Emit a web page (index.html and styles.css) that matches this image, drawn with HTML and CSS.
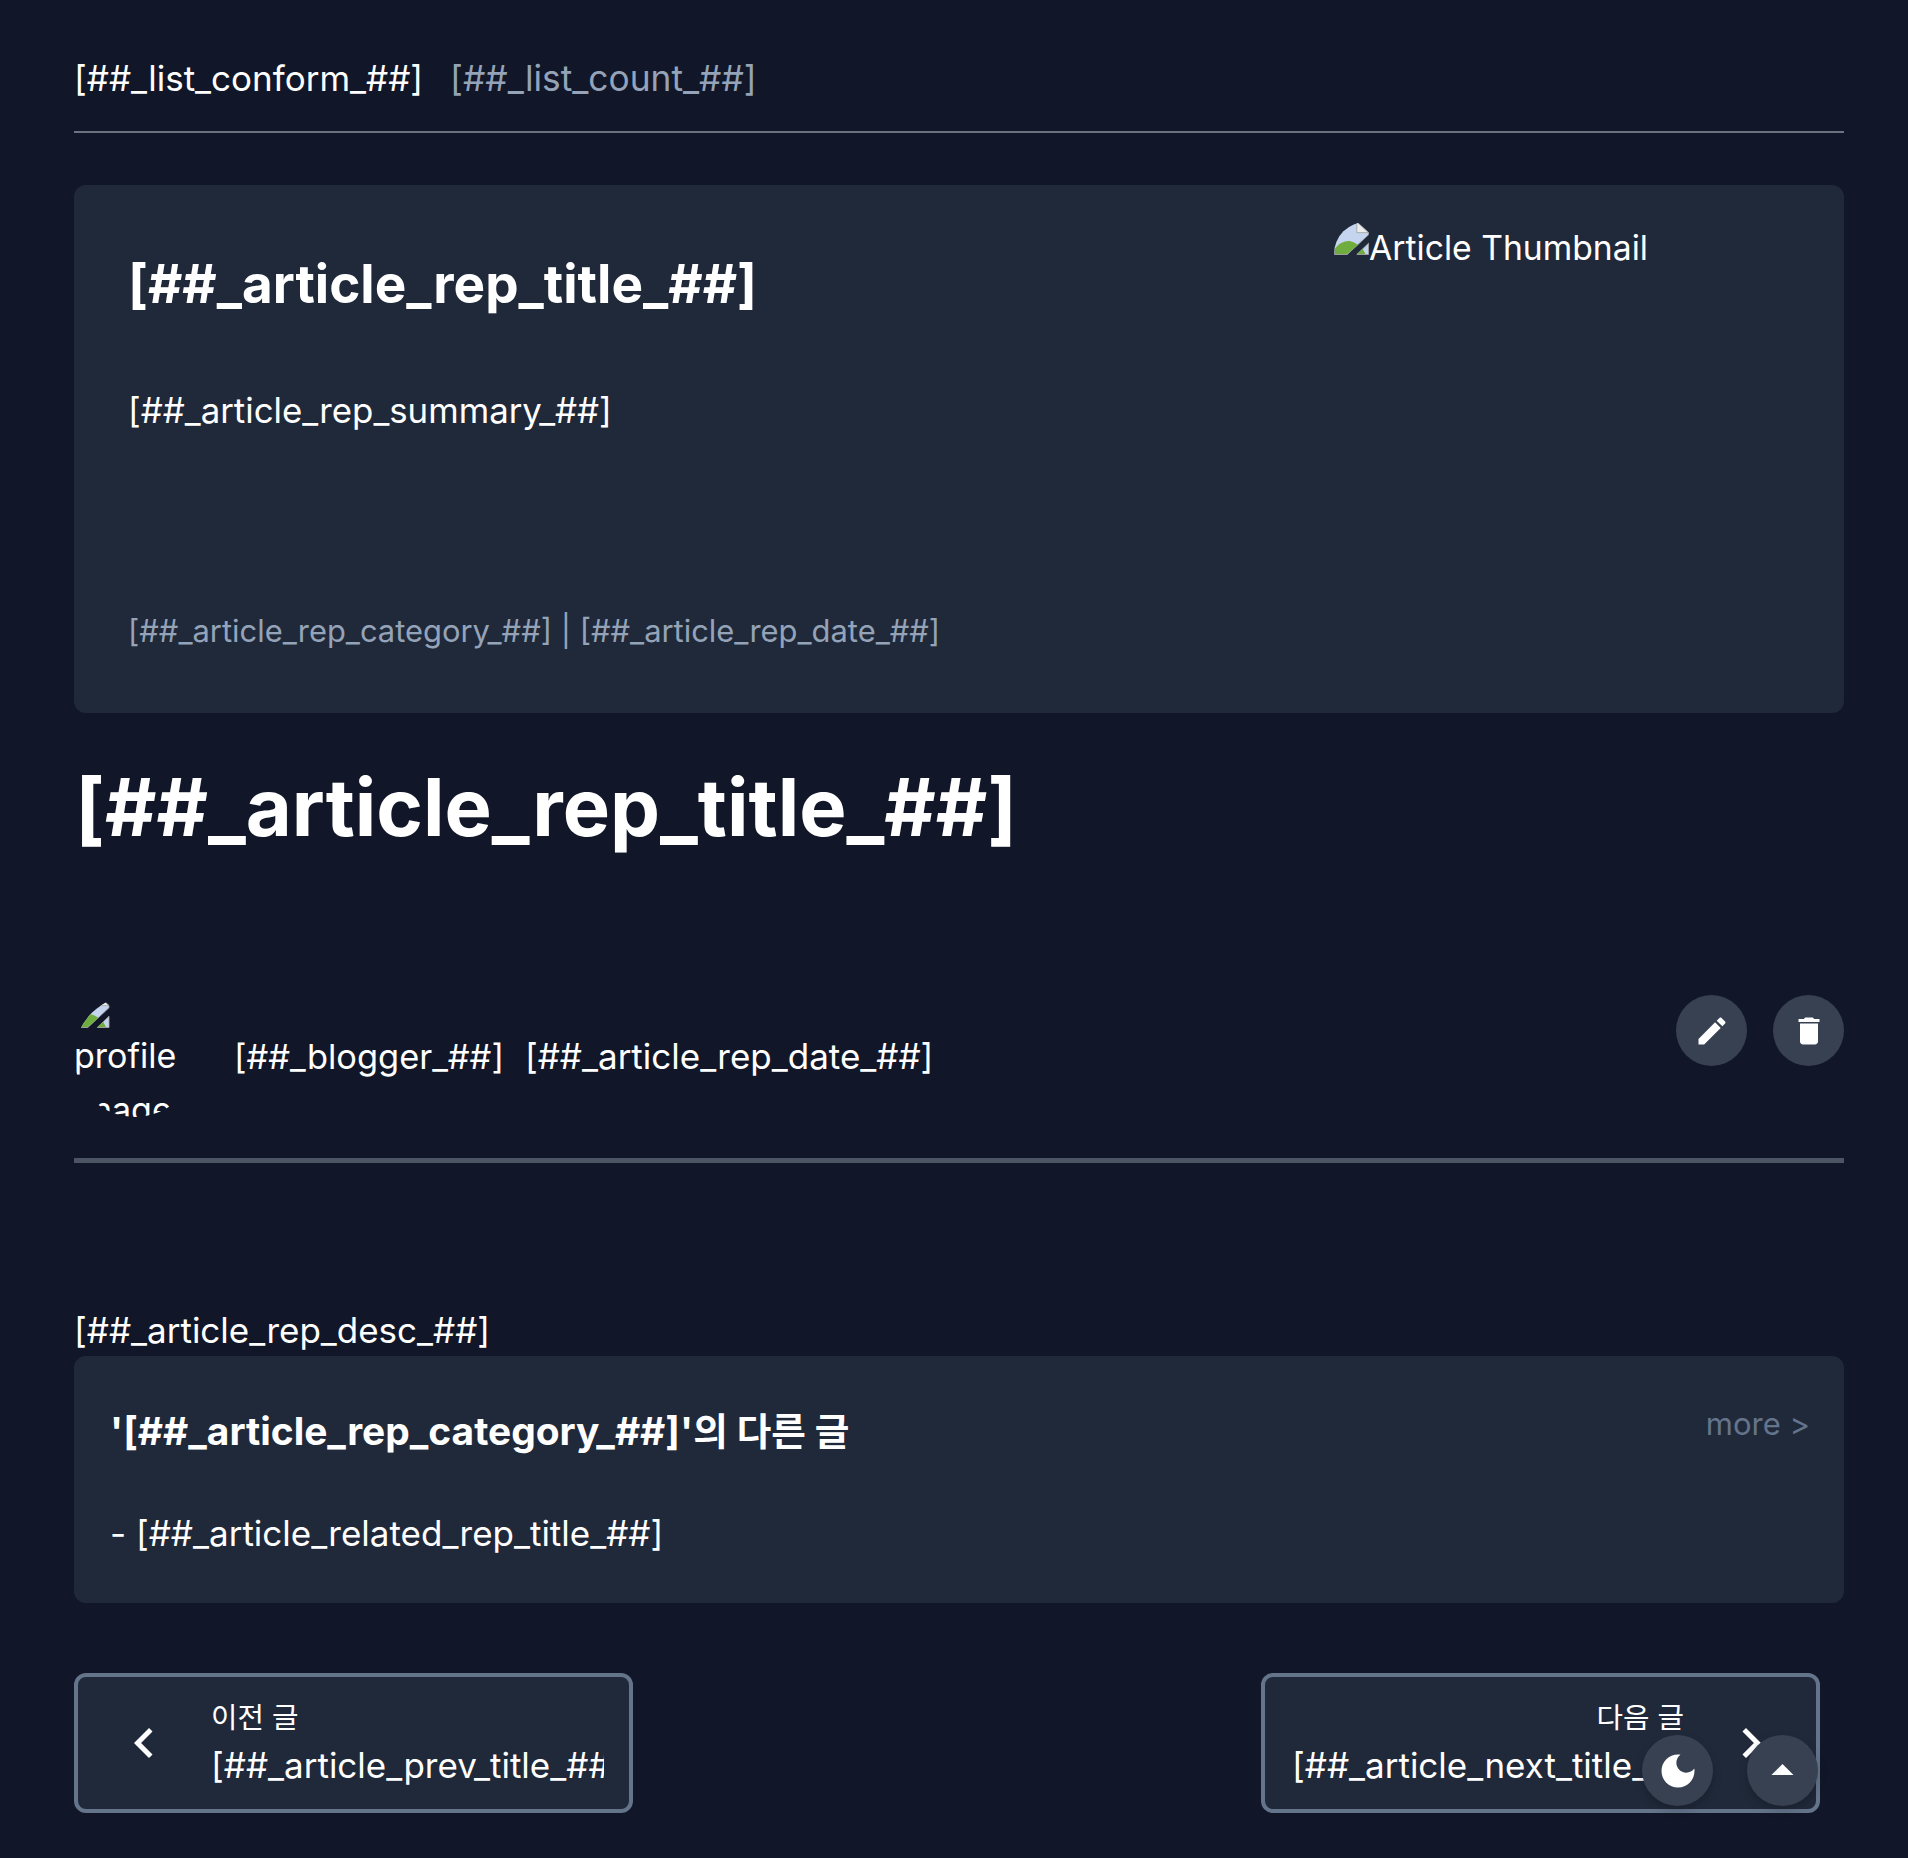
FILE: index.html
```html
<!DOCTYPE html>
<html lang="ko">

<head>
    <meta charset="UTF-8">
    <meta name="viewport" content="width=device-width, initial-scale=1.0">
    <title>Article</title>
    <link rel="stylesheet" href="styles.css">
</head>

<body>
    <svg class="defs" width="0" height="0">
        <symbol id="broken" viewBox="0 0 16 16">
            <path fill="#c5d5ef" stroke="#a3a3a3" stroke-width="0.4" d="M0 0H10.5L16 5V6L6 15.3H0Z" />
            <path fill="#6fad3f" d="M0.2 15.1V12.5C2 10 5 8.6 7.5 9C9 9.3 10 10 11 10.8L6 15.1Z" />
            <path fill="#ececec" stroke="#a3a3a3" stroke-width="0.4" d="M10.5 0V5H16Z" />
            <path fill="#c5d5ef" stroke="#a3a3a3" stroke-width="0.4" d="M16 10V15.3H10.5Z" />
            <path fill="#6fad3f" d="M10.6 15.1L13.2 12.6L14.6 15.1Z" />
        </symbol>
    </svg>

    <div class="wrap">
        <div class="list-head">
            <span class="list-conform">[##_list_conform_##]</span>
            <span class="list-count">[##_list_count_##]</span>
        </div>

        <div class="rep-card">
            <div class="rep-info">
                <h3 class="rep-title">[##_article_rep_title_##]</h3>
                <p class="rep-summary">[##_article_rep_summary_##]</p>
                <p class="rep-meta">[##_article_rep_category_##] | [##_article_rep_date_##]</p>
            </div>
            <div class="rep-thumb">
                <svg class="broken"><use href="#broken" /></svg><span>Article Thumbnail</span>
            </div>
        </div>

        <h1 class="post-title">[##_article_rep_title_##]</h1>

        <div class="post-meta">
            <div class="profile">
                <svg class="broken"><use href="#broken" /></svg><span>profile image</span>
            </div>
            <span class="blogger">[##_blogger_##]</span>
            <span class="post-date">[##_article_rep_date_##]</span>
            <div class="actions">
                <button class="round-btn">
                    <svg class="icon" viewBox="0 0 24 24"><path d="M3 17.25V21h3.75L17.81 9.94l-3.75-3.75L3 17.25zM20.71 7.04c.39-.39.39-1.02 0-1.41l-2.34-2.34c-.39-.39-1.02-.39-1.41 0l-1.83 1.83 3.75 3.75 1.83-1.83z" /></svg>
                </button>
                <button class="round-btn">
                    <svg class="icon" viewBox="0 0 24 24"><path d="M6 19c0 1.1.9 2 2 2h8c1.1 0 2-.9 2-2V7H6v12zM19 4h-3.5l-1-1h-5l-1 1H5v2h14V4z" /></svg>
                </button>
            </div>
        </div>

        <div class="post-desc">[##_article_rep_desc_##]</div>

        <div class="related">
            <div class="related-head">
                <h4 class="related-title">'[##_article_rep_category_##]'<span class="related-ko">의 다른 글</span></h4>
                <a class="more">more &gt;</a>
            </div>
            <div class="related-item">- [##_article_related_rep_title_##]</div>
        </div>

        <div class="pager">
            <a class="pager-box">
                <svg class="chevron" viewBox="0 0 24 24"><path d="M15.41 7.41L14 6l-6 6 6 6 1.41-1.41L10.83 12z" /></svg>
                <div class="pager-text">
                    <div class="pager-label">이전 글</div>
                    <div class="pager-title">[##_article_prev_title_##]</div>
                </div>
            </a>
            <a class="pager-box pager-next">
                <div class="pager-text">
                    <div class="pager-label">다음 글</div>
                    <div class="pager-title">[##_article_next_title_##]</div>
                </div>
                <svg class="chevron" viewBox="0 0 24 24"><path d="M8.59 16.59L10 18l6-6-6-6-1.41 1.41L13.17 12z" /></svg>
            </a>
        </div>
    </div>

    <div class="floating">
        <button class="round-btn">
            <svg class="icon moon" viewBox="0 0 24 24"><path d="M12 3c-4.97 0-9 4.03-9 9s4.03 9 9 9 9-4.03 9-9c0-.46-.04-.92-.1-1.36-.98 1.37-2.58 2.26-4.4 2.26-2.98 0-5.4-2.42-5.4-5.4 0-1.81.89-3.42 2.26-4.4-.44-.06-.9-.1-1.36-.1z" /></svg>
        </button>
        <button class="round-btn">
            <svg class="icon arrow" viewBox="0 0 24 24"><path d="M7 14l5-5 5 5z" /></svg>
        </button>
    </div>
</body>

</html>
```

FILE: styles.css
```css
* {
    box-sizing: border-box;
}

body {
    margin: 0;
    height: 1858px;
    overflow: hidden;
    background-color: #111728;
    color: #fff;
    font-family: Inter, "Noto Sans CJK KR", sans-serif;
    font-size: 35px;
}

h1,
h3,
h4,
p {
    margin: 0;
}

.defs {
    position: absolute;
}

.wrap {
    padding: 0 64px 0 74px;
}

.list-head {
    display: flex;
    align-items: baseline;
    gap: 27px;
    height: 133px;
    padding-top: 53px;
    line-height: 50px;
    border-bottom: 2px solid #6b7280;
}

.list-count {
    color: #94a3b8;
    font-size: 35.3px;
}

.rep-card {
    display: flex;
    justify-content: space-between;
    height: 528px;
    margin-top: 52px;
    padding: 37px 54px 54px;
    background-color: #20293a;
    border-radius: 12px;
}

.rep-info {
    display: flex;
    flex-direction: column;
}

.rep-title {
    font-size: 53px;
    line-height: 70px;
    font-weight: 700;
    margin-top: 27px;
}

.rep-summary {
    margin-top: 66px;
    font-size: 34.8px;
    line-height: 50px;
}

.rep-meta {
    margin-top: auto;
    margin-bottom: 6px;
    color: #94a3b8;
    font-size: 30.9px;
    line-height: 44px;
}

.rep-thumb {
    width: 456px;
    height: 100%;
    border-radius: 32px;
    overflow: hidden;
    display: flex;
    align-items: flex-start;
    font-size: 33.7px;
    line-height: 51px;
}

.broken {
    flex: none;
    width: 35px;
    height: 34px;
}

.post-title {
    margin-top: 49px;
    padding-left: 1px;
    font-size: 79.4px;
    line-height: 90px;
    font-weight: 700;
}

.post-meta {
    display: flex;
    align-items: center;
    gap: 21px;
    margin-top: 143px;
    padding-bottom: 41px;
    border-bottom: 5px solid #4b5563;
}

.profile {
    flex: none;
    width: 122px;
    height: 122px;
    margin-right: 17px;
    border-radius: 50%;
    overflow: hidden;
    font-size: 34px;
    line-height: 54px;
}

.profile .broken {
    display: block;
    width: 36px;
}

.blogger {
    font-size: 34.4px;
}

.actions {
    display: flex;
    gap: 26px;
    margin-left: auto;
    align-self: flex-start;
}

.round-btn {
    display: flex;
    align-items: center;
    justify-content: center;
    width: 71px;
    height: 71px;
    padding: 0;
    border: none;
    border-radius: 50%;
    background-color: #374151;
}

.icon {
    width: 36px;
    height: 36px;
    fill: #fff;
}

.moon {
    width: 44px;
    height: 44px;
}

.arrow {
    width: 53px;
    height: 53px;
}

.post-desc {
    margin-top: 142px;
    line-height: 50px;
}

.related {
    height: 247px;
    margin-top: 1px;
    padding: 47px 34px 0 36px;
    background-color: #20293a;
    border-radius: 12px;
}

.related-head {
    display: flex;
    justify-content: space-between;
    align-items: flex-start;
}

.related-title {
    font-size: 38.9px;
    line-height: 56px;
    font-weight: 700;
}

.related-ko {
    font-size: 37.6px;
}

.more {
    margin-top: -1px;
    color: #64748b;
    font-size: 31px;
    line-height: 44px;
}

.related-item {
    margin-top: 48px;
    line-height: 50px;
}

.pager {
    display: flex;
    justify-content: space-between;
    margin-top: 70px;
    padding-right: 24px;
}

.pager-box {
    display: flex;
    align-items: center;
    gap: 37px;
    width: 559px;
    height: 140px;
    padding: 0 25px 0 36px;
    background-color: #20293a;
    border: 4px solid #64748b;
    border-radius: 12px;
}

.pager-next {
    padding: 0 35px 0 27px;
}

.chevron {
    flex: none;
    width: 60px;
    height: 60px;
    fill: #fff;
}

.pager-text {
    flex: 1;
    min-width: 0;
    padding-top: 1px;
    overflow: hidden;
}

.pager-next .pager-label {
    text-align: right;
}

.pager-label {
    font-size: 28.8px;
    line-height: 42px;
}

.pager-title {
    margin-top: 1px;
    line-height: 50px;
    white-space: nowrap;
}

.floating {
    position: fixed;
    right: 90px;
    bottom: 52px;
    display: flex;
    gap: 34px;
}

.floating .round-btn {
    box-shadow: 0 4px 10px rgba(0, 0, 0, 0.2);
}
```
